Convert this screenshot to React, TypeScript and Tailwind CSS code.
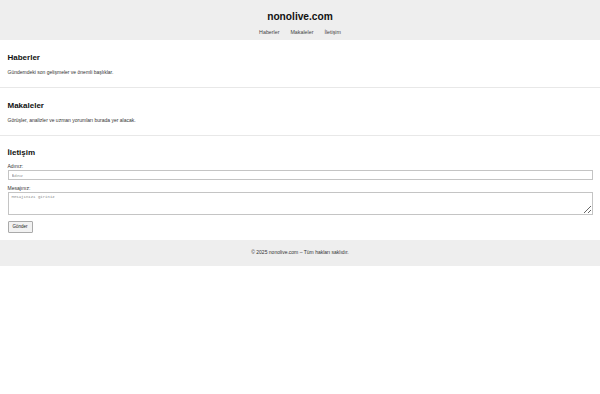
export default function App() {
  return (
    <div className="min-h-[394px] bg-white text-[#222] [font-family:'Liberation_Sans',Arial,sans-serif]">
      <header className="h-10 bg-[#eeeeee] flex flex-col items-center pt-[10px]">
        <h1 className="text-[10.2px] leading-[14px] font-bold text-[#111]">nonolive.com</h1>
        <nav className="mt-[4px] flex gap-[11px] text-[5.3px] leading-[8px] text-[#444]">
          <a>Haberler</a>
          <a>Makaleler</a>
          <a>İletişim</a>
        </nav>
      </header>

      <section className="px-[7.5px] pt-[12px] pb-[11px] border-b border-[#e8e8e8]">
        <h2 className="text-[8px] leading-[12px] font-bold text-[#111]">Haberler</h2>
        <p className="mt-[4px] text-[5px] leading-[8px] text-[#333]">
          Gündemdeki son gelişmeler ve önemli başlıklar.
        </p>
      </section>

      <section className="px-[7.5px] pt-[12px] pb-[11px] border-b border-[#e8e8e8]">
        <h2 className="text-[8px] leading-[12px] font-bold text-[#111]">Makaleler</h2>
        <p className="mt-[4px] text-[5px] leading-[8px] text-[#333]">
          Görüşler, analizler ve uzman yorumları burada yer alacak.
        </p>
      </section>

      <section className="px-[7.5px] pt-[11px] pb-[7px]">
        <h2 className="text-[8px] leading-[12px] font-bold text-[#111]">İletişim</h2>
        <form className="mt-[3px] flex flex-col">
          <label className="text-[5px] leading-[8px] text-[#333]">Adınız:</label>
          <input
            placeholder="Adınız"
            className="h-[10px] w-full border border-[#c4c4c4] px-[3px] text-[4px] placeholder:text-[#999] outline-none"
          />
          <label className="mt-[4px] text-[5px] leading-[8px] text-[#333]">Mesajınız:</label>
          <textarea
            placeholder="Mesajınızı giriniz"
            className="h-[23px] w-full border border-[#c4c4c4] px-[3px] py-[1px] text-[4px] leading-[6px] [font-family:'Liberation_Mono',monospace] placeholder:text-[#888] outline-none"
          />
          <button
            type="button"
            className="mt-[6px] self-start h-[12px] w-[25px] border border-[#aaa] rounded-[1px] bg-[#f2f2f2] text-[4.5px] text-[#222]"
          >
            Gönder
          </button>
        </form>
      </section>

      <footer className="h-[26px] bg-[#eeeeee] flex items-center justify-center text-[5px] text-[#333]">
        © 2025 nonolive.com – Tüm hakları saklıdır.
      </footer>
    </div>
  );
}
